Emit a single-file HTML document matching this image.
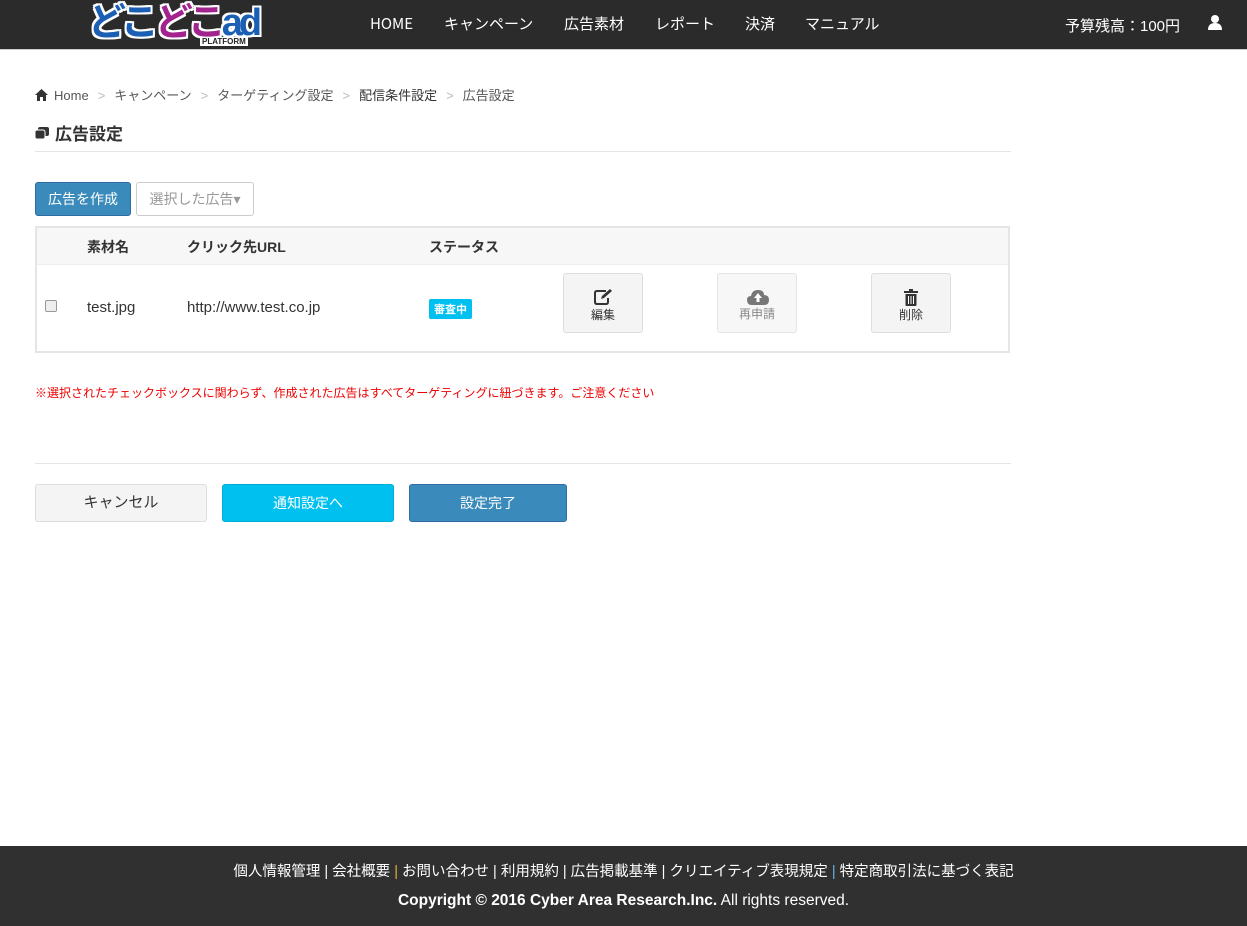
<!DOCTYPE html>
<html><head><meta charset="utf-8"><style>
*{box-sizing:border-box;margin:0;padding:0}
body{width:1247px;height:926px;position:relative;background:#fff;font-family:"Liberation Sans","Noto Sans CJK JP",sans-serif;color:#333;font-size:14px;overflow:hidden}
.hdr{position:absolute;left:0;top:0;width:1247px;height:50px;background:#2b2b2b;border-bottom:1px solid #ccc}
.nav span{position:absolute;top:14px;color:#fff;font-size:15px;line-height:20px;font-family:"Noto Sans CJK JP","Liberation Sans",sans-serif}
.logo{position:absolute;left:88px;top:3px;font-weight:bold;font-size:38px;letter-spacing:-4px;line-height:40px;text-shadow:2px 0 #fff,-2px 0 #fff,0 2px #fff,0 -2px #fff,2px 2px #fff,-2px -2px #fff,2px -2px #fff,-2px 2px #fff}
.abs{position:absolute}
.bc{top:85px;left:35px;font-size:13px;color:#555}
.bc i{color:#bbb;font-style:normal;margin:0 9px}
.btn{position:absolute;border-radius:3px;text-align:center}
</style></head><body>
<div class="hdr">
<div class="logo"><span style="color:#1a5fb4">どこ</span><span style="color:#a3238e">どこ</span><span style="color:#1a5fb4">ad</span></div>
<div class="abs" style="left:200px;top:37px;font-size:8px;color:#222;font-weight:bold;background:#fff;padding:0 2px;line-height:9px">PLATFORM</div>
<div class="nav"><span style="left:370px">HOME</span><span style="left:444px">キャンペーン</span><span style="left:564px">広告素材</span><span style="left:655px">レポート</span><span style="left:745px">決済</span><span style="left:805px">マニュアル</span></div>
<div class="abs" style="left:1065px;top:15px;color:#fff;font-size:15px">予算残高：100円</div>
<svg class="abs" style="left:1207px;top:14px" width="16" height="16" viewBox="0 0 16 16"><circle cx="8" cy="5" r="4" fill="#fff"/><path d="M1 16 Q1 9 8 9 Q15 9 15 16Z" fill="#fff"/></svg>
</div>
<div class="abs bc"><svg width="13" height="12" viewBox="0 0 13 12" style="vertical-align:-1px;margin-right:6px"><path d="M6.5 0 L13 6 H11 V12 H8 V8 H5 V12 H2 V6 H0Z" fill="#333"/></svg>Home<i>&gt;</i>キャンペーン<i>&gt;</i>ターゲティング設定<i>&gt;</i><span style="color:#333">配信条件設定</span><i>&gt;</i>広告設定</div>
<div class="abs" style="left:35px;top:120px;font-size:17px;font-weight:bold"><svg width="14" height="13" viewBox="0 0 14 13" style="margin-right:6px"><rect x="3" y="0" width="11" height="9" rx="2" fill="#333"/><rect x="0" y="3" width="10" height="9" rx="2" fill="#333" stroke="#fff" stroke-width="1"/></svg>広告設定</div>
<div class="abs" style="left:35px;top:151px;width:976px;border-top:1px solid #e5e5e5"></div>
<div class="btn" style="left:35px;top:182px;width:96px;height:34px;background:#3a8bbb;color:#fff;line-height:32px;border:1px solid #2e6da4">広告を作成</div>
<div class="btn" style="left:136px;top:182px;width:118px;height:34px;border:1px solid #ccc;color:#999;line-height:32px">選択した広告▾</div>
<div class="abs" style="left:35px;top:226px;width:975px;height:127px;border:2px solid #e5e5e5">
<div style="height:37px;background:#f7f7f7;border-bottom:1px solid #eee;font-weight:bold;font-size:14px;position:relative">
<span class="abs" style="left:50px;top:9px">素材名</span><span class="abs" style="left:150px;top:9px">クリック先URL</span><span class="abs" style="left:392px;top:9px">ステータス</span></div>
<div class="abs" style="left:8px;top:72px;width:12px;height:12px;border:1px solid #999;border-radius:2px;background:#eee"></div>
<span class="abs" style="left:50px;top:71px;font-size:15px">test.jpg</span>
<span class="abs" style="left:150px;top:71px;font-size:15px">http://www.test.co.jp</span>
<span class="abs" style="left:392px;top:71px;background:#00c0ef;color:#fff;font-size:11px;font-weight:bold;padding:2px 5px;border-radius:2px">審査中</span>
<div class="btn" style="left:526px;top:45px;width:80px;height:60px;background:#f4f4f4;border:1px solid #ddd;font-size:12px;color:#333"><svg width="20" height="18" viewBox="0 0 20 18" style="margin-top:14px;display:block;margin-left:30px"><path d="M12 3 H3 Q1 3 1 5 V14 Q1 16 3 16 H12 Q14 16 14 14 V10" fill="none" stroke="#333" stroke-width="2"/><path d="M7 11 L8 8 L16 1 L18 3 L10 10Z" fill="#333"/></svg>編集</div>
<div class="btn" style="left:680px;top:45px;width:80px;height:60px;background:#f7f7f7;border:1px solid #e5e5e5;font-size:12px;color:#888"><svg width="22" height="16" viewBox="0 0 22 16" style="margin-top:15px;display:block;margin-left:29px"><path d="M5 16 Q0 16 0 11 Q0 7 4 7 Q5 1 11 1 Q17 1 17 6 Q22 6 22 11 Q22 16 17 16Z" fill="#777"/><path d="M11 4 L15 9 H12.5 V13 H9.5 V9 H7Z" fill="#fff"/></svg>再申請</div>
<div class="btn" style="left:834px;top:45px;width:80px;height:60px;background:#f4f4f4;border:1px solid #ddd;font-size:12px;color:#333"><svg width="14" height="17" viewBox="0 0 14 17" style="margin-top:15px;display:block;margin-left:32px"><rect x="0" y="2" width="14" height="2" fill="#333"/><rect x="5" y="0" width="4" height="2" fill="#333"/><path d="M1.5 5 H12.5 V16 Q12.5 17 11.5 17 H2.5 Q1.5 17 1.5 16Z" fill="#333"/><path d="M4.5 7 V15 M7 7 V15 M9.5 7 V15" stroke="#fff" stroke-width="1"/></svg>削除</div>
</div>
<div class="abs" style="left:35px;top:384px;font-size:12px;color:#e00">※選択されたチェックボックスに関わらず、作成された広告はすべてターゲティングに紐づきます。ご注意ください</div>
<div class="abs" style="left:35px;top:463px;width:976px;border-top:1px solid #e5e5e5"></div>
<div class="btn" style="left:35px;top:484px;width:172px;height:38px;background:#f4f4f4;border:1px solid #ddd;line-height:36px;font-size:15px">キャンセル</div>
<div class="btn" style="left:222px;top:484px;width:172px;height:38px;background:#00c0ef;border:1px solid #00acd6;color:#fff;line-height:36px">通知設定へ</div>
<div class="btn" style="left:409px;top:484px;width:158px;height:38px;background:#3a8bbb;border:1px solid #2e6da4;color:#fff;line-height:36px">設定完了</div>
<div class="abs" style="left:0;top:846px;width:1247px;height:80px;background:#303030;color:#fff;text-align:center">
<div style="margin-top:14px;font-size:14.5px">個人情報管理 | 会社概要 <span style="color:#e8b040">|</span> お問い合わせ | 利用規約 | 広告掲載基準 | クリエイティブ表現規定 <span style="color:#6ab0e0">|</span> 特定商取引法に基づく表記</div>
<div style="margin-top:11px;font-size:15.5px"><b>Copyright © 2016 Cyber Area Research.Inc.</b> All rights reserved.</div>
</div>
</body></html>
